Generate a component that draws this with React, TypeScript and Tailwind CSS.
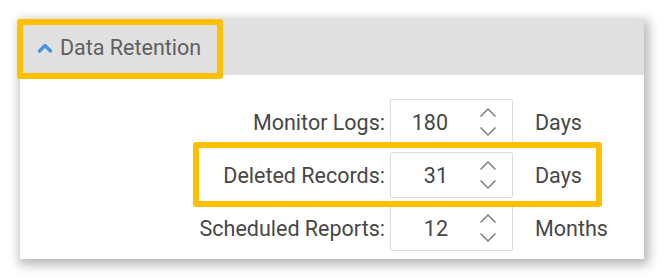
import React from 'react';

const rows = [
    { label: 'Monitor Logs:', value: '180', unit: 'Days' },
    { label: 'Deleted Records:', value: '31', unit: 'Days' },
    { label: 'Scheduled Reports:', value: '12', unit: 'Months' },
];

const Spinner: React.FC = () => (
    <svg width="18" height="32" viewBox="0 0 18 32" fill="none" stroke="#858585" strokeWidth="1.7" strokeLinecap="round" strokeLinejoin="round">
        <path d="M2 10 L9 3 L16 10" />
        <path d="M2 22 L9 29 L16 22" />
    </svg>
);

const App: React.FC = () => {
    return (
        <div className="w-[665px] h-[280px] bg-white pt-[20px] pl-[20px] overflow-hidden" style={{ fontFamily: 'Roboto, "Liberation Sans", sans-serif' }}>
            <div className="relative w-[624px] h-[239px] bg-white shadow-[2px_3px_10px_3px_rgba(0,0,0,0.28)]">
                {/* Header */}
                <div className="h-[55px] bg-[#e0e0e0] flex items-center pl-[17px] gap-[7px]">
                    <svg width="16" height="12" viewBox="0 0 16 12" fill="none" stroke="#4a90e2" strokeWidth="3.4" strokeLinecap="round" strokeLinejoin="round">
                        <path d="M2.5 9 L8 3.5 L13.5 9" />
                    </svg>
                    <span className="text-[21.5px] text-[#5f5f5f] pt-[1px]">Data Retention</span>
                </div>

                {/* Rows */}
                <div className="flex flex-col gap-[7px] pt-[24px]">
                    {rows.map((r) => (
                        <div key={r.label} className="flex items-center h-[46px]">
                            <div className="w-[365px] text-right text-[21.5px] text-[#474747] pt-[3px]">{r.label}</div>
                            <div className="ml-[5px] w-[123px] h-full border border-[#dcdcdc] rounded-[2px] flex items-center">
                                <span className="w-[57px] text-right text-[21.5px] text-[#474747] pt-[3px]">{r.value}</span>
                                <span className="ml-[31px] flex items-center"><Spinner /></span>
                            </div>
                            <div className="ml-[22px] text-[21.5px] text-[#474747] pt-[3px]">{r.unit}</div>
                        </div>
                    ))}
                </div>

                {/* Highlights */}
                <div className="absolute left-[-3px] top-[-1px] w-[206px] h-[60px] border-[6px] border-[#ffc000] rounded-[3px]" />
                <div className="absolute left-[173px] top-[122px] w-[409px] h-[65px] border-[6px] border-[#ffc000] rounded-[3px]" />
            </div>
        </div>
    );
};

export default App;
